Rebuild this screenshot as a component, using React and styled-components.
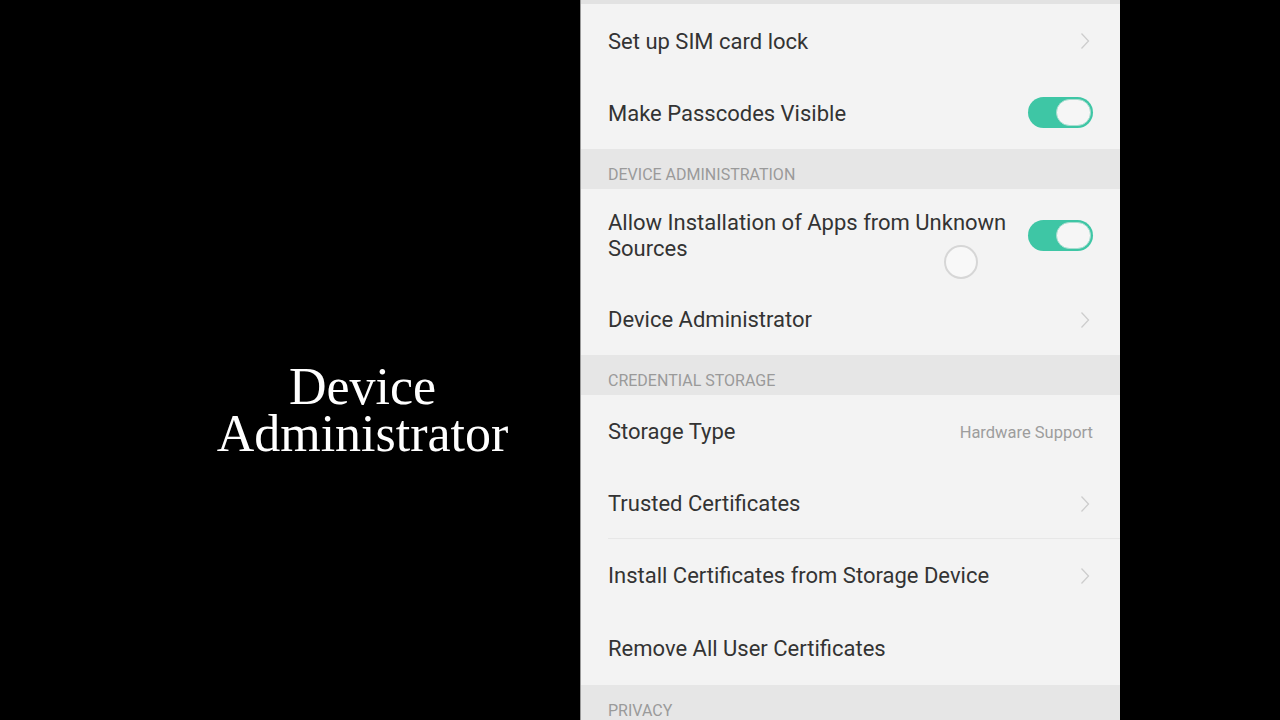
import React from 'react'
import styled, { createGlobalStyle } from 'styled-components'

const Global = createGlobalStyle`
  html, body { margin: 0; padding: 0; background: #000; }
  body { width: 1280px; height: 720px; overflow: hidden; }
`

const Page = styled.div`
  width: 1280px;
  height: 720px;
  background: #000;
  display: flex;
`

const Side = styled.div`
  width: 580px;
  display: flex;
  align-items: center;
  justify-content: center;
  padding-left: 145px;
  padding-top: 100px;
  box-sizing: border-box;
`

const Title = styled.h1`
  margin: 0;
  color: #fff;
  font-family: "Liberation Serif", "Times New Roman", serif;
  font-weight: normal;
  font-size: 52px;
  text-align: center;
`

const TitleLine = styled.div`
  height: 47px;
  line-height: 47px;
`

const Phone = styled.div`
  position: relative;
  width: 540px;
  height: 720px;
  background: #f3f3f3;
  overflow: hidden;
  border-left: 1px solid #9a9a9a;
  box-sizing: border-box;
  font-family: Roboto, "Noto Sans", sans-serif;
`

const TopStrip = styled.div`
  height: 4px;
  background: #e2e2e2;
`

const Header = styled.div`
  height: 40px;
  background: #e6e6e6;
  display: flex;
  align-items: center;
  padding-left: 27px;
  padding-top: ${p => p.$top || 10}px;
  font-size: 16px;
  color: #9a9a9a;
  box-sizing: border-box;
`

const Row = styled.div`
  height: ${p => p.$h || 72}px;
  display: flex;
  align-items: center;
  margin-left: 27px;
  padding-right: 27px;
  border-bottom: 1px solid ${p => (p.$line ? '#e7e7e7' : 'transparent')};
  box-sizing: border-box;
  gap: 8px;
`

const Label = styled.div`
  flex: 1;
  padding-top: ${p => (p.$wrap ? 1 : 3)}px;
  font-size: 22px;
  line-height: 26px;
  color: #333;
`

const Value = styled.span`
  padding-top: 3px;
  font-size: 16.5px;
  color: #9d9d9d;
`

const Track = styled.div`
  width: 65px;
  height: 31px;
  border-radius: 16px;
  background: #3ec6a5;
  display: flex;
  align-items: center;
  justify-content: flex-end;
  padding: 0 2px;
  box-sizing: border-box;
  flex-shrink: 0;
`

const Knob = styled.div`
  width: 35px;
  height: 27px;
  border-radius: 14px;
  background: #f6f6f6;
  border: 1px solid #a9ddd0;
  box-sizing: border-box;
`

const Arrow = styled.svg`
  margin-right: 3px;
  margin-top: 2px;
  flex-shrink: 0;
`

const Touch = styled.div`
  position: absolute;
  left: 363px;
  top: 245px;
  width: 34px;
  height: 34px;
  border-radius: 50%;
  background: #f8f8f8;
  border: 2px solid #d6d6d6;
  box-sizing: border-box;
`

const Chevron = () => (
  <Arrow width="10" height="18" viewBox="0 0 10 18" fill="none">
    <path d="M1.5 1.5 L8.5 9 L1.5 16.5" stroke="#cdcdcd" strokeWidth="1.3" />
  </Arrow>
)

const Toggle = () => (
  <Track>
    <Knob />
  </Track>
)

const App = () => {
  return (
    <Page>
      <Global />
      <Side>
        <Title>
          <TitleLine>Device</TitleLine>
          <TitleLine>Administrator</TitleLine>
        </Title>
      </Side>
      <Phone>
        <TopStrip />
        <Row $h={73}>
          <Label>Set up SIM card lock</Label>
          <Chevron />
        </Row>
        <Row>
          <Label>Make Passcodes Visible</Label>
          <Toggle />
        </Row>
        <Header>DEVICE ADMINISTRATION</Header>
        <Row $h={94}>
          <Label $wrap>Allow Installation of Apps from Unknown Sources</Label>
          <Toggle />
        </Row>
        <Row>
          <Label>Device Administrator</Label>
          <Chevron />
        </Row>
        <Header>CREDENTIAL STORAGE</Header>
        <Row>
          <Label>Storage Type</Label>
          <Value>Hardware Support</Value>
        </Row>
        <Row $line>
          <Label>Trusted Certificates</Label>
          <Chevron />
        </Row>
        <Row>
          <Label>Install Certificates from Storage Device</Label>
          <Chevron />
        </Row>
        <Row $h={74}>
          <Label>Remove All User Certificates</Label>
        </Row>
        <Header $top={11}>PRIVACY</Header>
        <Touch />
      </Phone>
    </Page>
  )
}

export default App
